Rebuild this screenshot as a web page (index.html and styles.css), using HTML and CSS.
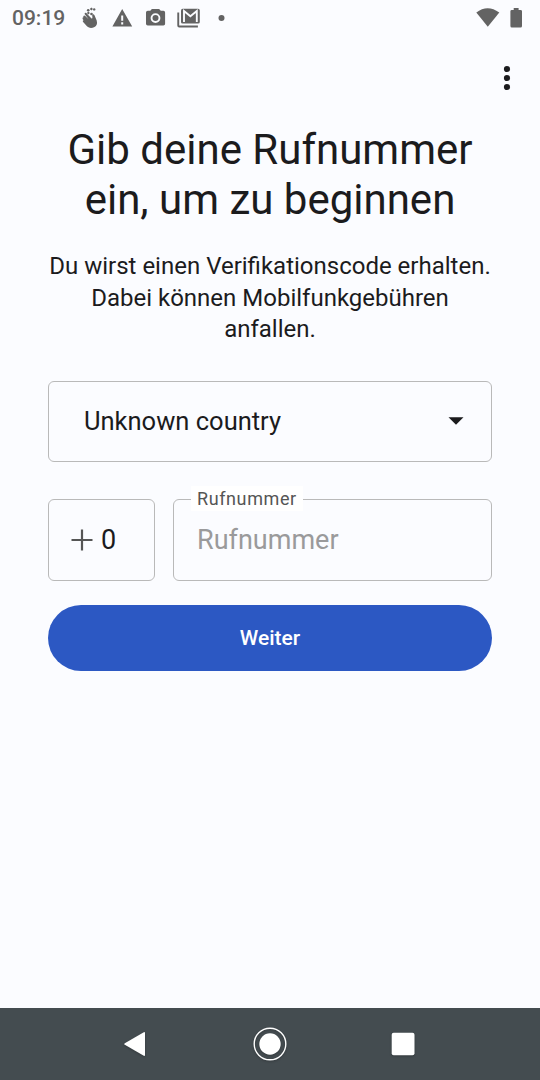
FILE: index.html
```html
<!DOCTYPE html>
<html lang="de">
<head>
<meta charset="utf-8">
<title>Rufnummer</title>
<link rel="stylesheet" href="styles.css">
</head>
<body>
<div class="screen">
  <header class="status">
    <span class="clock">09:19</span>
    <svg class="notifications" width="150" height="36" viewBox="78 0 150 36">
      <g fill="#636363">
        <g class="hand">
          <path d="M83.3 16.2q.8-1.3 2-.2l3.3 3.3-4-5.2q0-1.8 1.7-1.2l5.2 5.6q1 .3.9-1.1l-.2-2.4q1.2-1.6 2.3.2l2.2 5.3q1.2 4.6-2.2 6.6-4.2 2.2-7.3-.5l-4.3-4.8q-.6-1.4.7-1.5l-1-1.4q-.5-1.4.8-1.6z"/>
          <path d="M91.4 7.9l1.6 1.6-1.6 1.6-1.6-1.6zM88.4 12.1l1.5 1.5-1.5 1.5-1.5-1.5z" transform="translate(0 -.5)"/>
          <circle cx="94.2" cy="9.4" r="1.2"/><circle cx="88.2" cy="10.2" r="1.3"/><circle cx="91.5" cy="14" r="1.3"/>
        </g>
        <path fill-rule="evenodd" d="M122.2 9l10 17.6h-19.8zM121.2 15.6v5.2h2v-5.2zm0 6.7v2.1h2v-2.1z"/>
        <path fill-rule="evenodd" d="M151.9 9h7.2l1.7 1.8h2.6q1.7 0 1.7 1.7v11.3q0 1.8-1.7 1.8h-15.6q-1.8 0-1.8-1.8V12.500q0-1.700 1.8-1.700h2.500zM155.500 13.200a4.900 4.900 0 1 0 0 9.800 4.900 4.900 0 0 0 0-9.800z"/>
        <circle cx="155.500" cy="18.100" r="3"/>
        <path d="M177.300 12.400h1.900v13.200h18.700v1.800h-18.700q-1.900 0-1.900-1.900z"/>
        <rect x="181" y="8.700" width="18.800" height="14.900" rx="1.700"/>
        <circle cx="221.500" cy="18" r="3"/>
      </g>
      <path d="M184 21.900v-11l6.400 5.300 6.400-5.300v11" fill="none" stroke="#fbfcff" stroke-width="1.900"/>
    </svg>
    <svg class="system" width="50" height="36" viewBox="474 0 50 36">
      <g fill="#636363">
        <path d="M476.300 12.500q11.200-8.600 23 0l-11.500 14.200z"/>
        <path d="M513.700 8h4.900v1.900h2q1.400 0 1.400 1.400v14.800q0 1.500-1.400 1.500h-8.800q-1.400 0-1.400-1.500V11.300q0-1.400 1.400-1.400h1.900z"/>
      </g>
    </svg>
  </header>
  <div class="toolbar">
    <svg width="10" height="28" viewBox="0 0 10 28" fill="#1b1b1d"><circle cx="5" cy="5" r="3.100"/><circle cx="5" cy="14" r="3.100"/><circle cx="5" cy="23" r="3.100"/></svg>
  </div>
  <main class="content">
    <h1 class="title">Gib deine Rufnummer<br>ein, um zu beginnen</h1>
    <p class="description">Du wirst einen Verifikationscode erhalten.<br>Dabei können Mobilfunkgebühren<br>anfallen.</p>
    <div class="country">
      <span>Unknown country</span>
      <svg width="16" height="8" viewBox="0 0 16 8"><path d="M.5.200h15L8 7.700z" fill="#1b1b1d"/></svg>
    </div>
    <div class="number-row">
      <div class="field code">
        <svg width="22" height="22" viewBox="0 0 22 22"><path d="M11 .500v21M.500 11h21" stroke="#555" stroke-width="2.200"/></svg>
        <span>0</span>
      </div>
      <div class="field phone">
        <span class="label">Rufnummer</span>
        <span class="placeholder">Rufnummer</span>
      </div>
    </div>
    <button class="next">Weiter</button>
  </main>
  <nav class="navbar">
    <svg width="540" height="72" viewBox="0 0 540 72" fill="#fff">
      <path d="M124.800 35.200l19-11q1.200-.5 1.200.8v22q0 1.300-1.200.8l-19-11q-1.200-.8 0-1.600z"/>
      <circle cx="270" cy="36" r="10.700"/>
      <circle cx="270" cy="36" r="15.800" fill="none" stroke="#fff" stroke-width="1.400"/>
      <rect x="391.700" y="24.700" width="22.800" height="22.600" rx="2"/>
    </svg>
  </nav>
</div>
</body>
</html>
```
FILE: styles.css
```css
body { margin: 0; }
.screen {
  width: 540px;
  height: 1080px;
  display: flex;
  flex-direction: column;
  background: #fbfcff;
  color: #1b1b1d;
  font-family: Roboto, sans-serif;
}
.status {
  height: 36px;
  display: flex;
  align-items: center;
  padding: 0 16px 0 12px;
}
.clock {
  width: 66px;
  font-size: 21px;
  font-weight: 500;
  line-height: 36px;
  color: #636363;
}
.system { margin-left: auto; }
.toolbar {
  height: 84px;
  box-sizing: border-box;
  display: flex;
  justify-content: flex-end;
  align-items: center;
  padding-right: 28px;
}
.content {
  flex: 1;
  padding: 5px 48px 0;
}
.title {
  margin: 0;
  font-size: 42px;
  font-weight: 400;
  line-height: 50px;
  text-align: center;
  white-space: nowrap;
}
.description {
  margin: 26px 0 0;
  font-size: 24px;
  line-height: 31.500px;
  text-align: center;
  white-space: nowrap;
}
.country {
  height: 81px;
  box-sizing: border-box;
  margin-top: 35px;
  padding: 0 27px 0 35px;
  display: flex;
  align-items: center;
  justify-content: space-between;
  border: 1.500px solid #b9b9b9;
  border-radius: 6px;
  font-size: 25.500px;
}
.number-row {
  display: flex;
  gap: 18px;
  margin-top: 37px;
}
.field {
  height: 82px;
  box-sizing: border-box;
  display: flex;
  align-items: center;
  border: 1.500px solid #b9b9b9;
  border-radius: 6px;
  font-size: 27px;
}
.code {
  width: 107px;
  padding-left: 22px;
  gap: 8px;
}
.phone {
  position: relative;
  flex: 1;
  padding-left: 23px;
}
.label {
  position: absolute;
  left: 17px;
  top: -14px;
  padding: 0 6px;
  height: 25px;
  line-height: 25px;
  background: #fff;
  color: #555;
  font-size: 18px;
  letter-spacing: .6px;
}
.placeholder { color: #9a9a9b; }
.next {
  display: block;
  width: 100%;
  height: 66px;
  margin-top: 24px;
  padding: 0;
  border: 0;
  border-radius: 33px;
  background: #2c58c3;
  color: #fff;
  font: 500 21px Roboto, sans-serif;
  line-height: 66px;
}
.navbar {
  height: 72px;
  background: #444c50;
}
.navbar svg { display: block; filter: drop-shadow(0 1px 1px rgba(0, 0, 0, .25)); }
```
